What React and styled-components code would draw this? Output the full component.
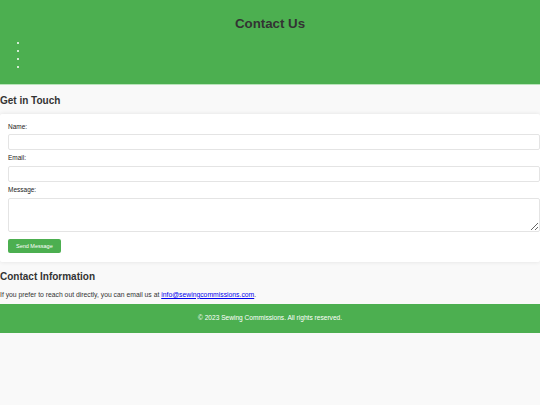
import React from "react";
import styled, { createGlobalStyle } from "styled-components";

const GlobalStyle = createGlobalStyle`
  body {
    margin: 0;
    background-color: #f9f9f9;
    color: #333;
    font-family: "Liberation Sans", Arial, sans-serif;
    font-size: 6.4px;
  }
`;

const Header = styled.header`
  background-color: #4caf50;
  padding: 8px 8px 8px 8px;
  border-bottom: 1px solid #b9e4ba;
  height: 68px;
`;

const Title = styled.h1`
  margin: 7.5px 0 8.7px;
  text-align: center;
  font-size: 13.3px;
  line-height: 15.3px;
  color: #333;
`;

const NavList = styled.ul`
  margin: 0;
  padding-left: 20px;
  list-style: disc;
  color: #fff;
`;

const NavItem = styled.li`
  height: 7.7px;
  line-height: 7.7px;
  font-size: 6.4px;
`;

const SectionTitle = styled.h2`
  margin: ${(p) => p.$margin || "10px 0 7px"};
  font-size: 10px;
  line-height: 11.5px;
  color: #333;
`;

const Card = styled.form`
  background-color: #fff;
  border-radius: 2px;
  box-shadow: 0 0 4px rgba(0, 0, 0, 0.1);
  padding: 9px 0 8.3px 8px;
`;

const Label = styled.label`
  display: block;
  font-size: 6.5px;
  line-height: 7.4px;
  margin-bottom: 4.3px;
  color: #222;
`;

const Field = styled.input`
  display: block;
  box-sizing: border-box;
  width: 100%;
  height: 16px;
  margin: 0 0 4.2px;
  padding: 4px;
  border: 1px solid #e4e4e4;
  border-radius: 2px;
  font-family: inherit;
  font-size: 6.4px;
  background: #fff;
`;

const Area = styled(Field).attrs({ as: "textarea" })`
  height: 34.5px;
  margin-bottom: 6.3px;
  resize: vertical;
`;

const SendButton = styled.button`
  display: block;
  height: 14.7px;
  padding: 0 8px;
  background-color: #4caf50;
  color: #fff;
  border: none;
  border-radius: 2px;
  font-family: inherit;
  font-size: 5.5px;
  cursor: pointer;
`;

const Text = styled.p`
  margin: 0 0 5.5px;
  font-size: 6.8px;
  line-height: 7.4px;
`;

const Footer = styled.footer`
  background-color: #4caf50;
  color: #fff;
  text-align: center;
  padding: 10.8px 0;
  font-size: 6.6px;
  line-height: 7.4px;
`;

const App = () => {
  return (
    <>
      <GlobalStyle />
      <Header>
        <Title>Contact Us</Title>
        <NavList>
          <NavItem />
          <NavItem />
          <NavItem />
          <NavItem />
        </NavList>
      </Header>

      <section>
        <SectionTitle>Get in Touch</SectionTitle>
        <Card onSubmit={(ev) => ev.preventDefault()}>
          <Label htmlFor="name">Name:</Label>
          <Field id="name" type="text" />
          <Label htmlFor="email">Email:</Label>
          <Field id="email" type="email" />
          <Label htmlFor="message">Message:</Label>
          <Area id="message" />
          <SendButton type="submit">Send Message</SendButton>
        </Card>
      </section>

      <section>
        <SectionTitle $margin="9.5px 0 8px">Contact Information</SectionTitle>
        <Text>
          If you prefer to reach out directly, you can email us at{" "}
          <a href="mailto:info@sewingcommissions.com">
            info@sewingcommissions.com
          </a>
          .
        </Text>
      </section>

      <Footer>© 2023 Sewing Commissions. All rights reserved.</Footer>
    </>
  );
};

export default App;
